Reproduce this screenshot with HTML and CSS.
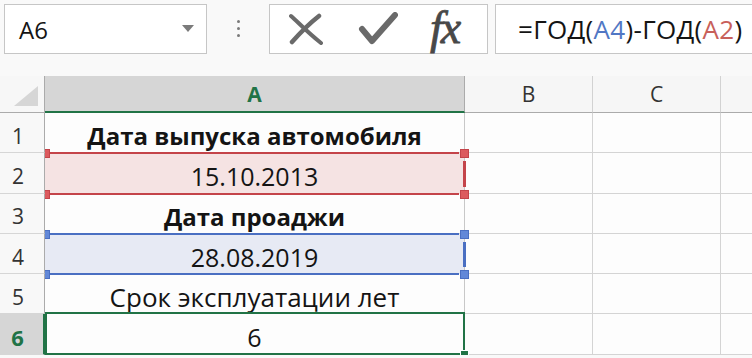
FILE: index.html
```html
<!DOCTYPE html>
<html lang="ru">
<head>
    <meta charset="UTF-8">
    <title>Срок эксплуатации</title>
    <link rel="stylesheet" href="styles.css">
</head>
<body>

<div class="bar">
    <div class="namebox">
        <span>A6</span>
        <svg class="arrow" width="12" height="7" viewBox="0 0 12 7"><polygon points="0,0 12,0 6,7" fill="#7b7b7b"/></svg>
    </div>
    <div class="dots"><i></i><i></i><i></i></div>
    <div class="fxbox">
        <svg width="36" height="32" viewBox="0 0 36 32">
            <path d="M3 3 C10 9 18 18 33 30" stroke="#6a6a6a" stroke-width="4" fill="none" stroke-linecap="round"/>
            <path d="M31 3 C22 10 12 20 4 29" stroke="#6a6a6a" stroke-width="4.5" fill="none" stroke-linecap="round"/>
        </svg>
        <svg width="40" height="34" viewBox="0 0 40 34">
            <path d="M4 17 L14 29 L37 3" stroke="#6a6a6a" stroke-width="6" fill="none" stroke-linecap="round" stroke-linejoin="round"/>
        </svg>
        <span class="fx">fx</span>
    </div>
    <div class="formula">=ГОД(<span class="blue">A4</span>)-ГОД(<span class="red">A2</span>)</div>
</div>

<div class="sheet">
    <div class="corner"><svg width="24" height="20" viewBox="0 0 24 20"><polygon points="24,0 24,20 0,20" fill="#d6d6d6"/></svg></div>
    <div class="colhead sel">A</div>
    <div class="colhead">B</div>
    <div class="colhead">C</div>
    <div class="colhead last"></div>

    <div class="rowhead">1</div>
    <div class="cell a bold">Дата выпуска автомобиля</div>
    <div class="cell"></div><div class="cell"></div><div class="cell last"></div>

    <div class="rowhead">2</div>
    <div class="cell a ref ref-red">15.10.2013
        <i class="h tl"></i><i class="h tr"></i><i class="h bl"></i><i class="h br"></i><i class="side"></i>
    </div>
    <div class="cell"></div><div class="cell"></div><div class="cell last"></div>

    <div class="rowhead">3</div>
    <div class="cell a bold">Дата проаджи</div>
    <div class="cell"></div><div class="cell"></div><div class="cell last"></div>

    <div class="rowhead">4</div>
    <div class="cell a ref ref-blue">28.08.2019
        <i class="h tl"></i><i class="h tr"></i><i class="h bl"></i><i class="h br"></i><i class="side"></i>
    </div>
    <div class="cell"></div><div class="cell"></div><div class="cell last"></div>

    <div class="rowhead">5</div>
    <div class="cell a wide">Срок эксплуатации лет</div>
    <div class="cell"></div><div class="cell"></div><div class="cell last"></div>

    <div class="rowhead sel">6</div>
    <div class="cell a active">6<i class="fill"></i></div>
    <div class="cell"></div><div class="cell"></div><div class="cell last"></div>
</div>

</body>
</html>
```

FILE: styles.css
```css
body {
    margin: 0;
    background: #f9f9f9;
    font-family: "Open Sans", "Noto Sans", sans-serif;
    color: #141414;
    overflow: hidden;
}
.bar {
    display: flex;
    align-items: center;
    height: 50px;
    padding: 4px 0 0 4px;
    width: 900px;
}
.namebox {
    box-sizing: border-box;
    width: 203px;
    height: 50px;
    background: #fff;
    border: 1px solid #c6c6c6;
    display: flex;
    align-items: center;
    justify-content: space-between;
    padding: 0 12px 0 14px;
    font-size: 24px;
}
.arrow {
    margin-top: -2px;
}
.dots {
    width: 62px;
    display: flex;
    flex-direction: column;
    align-items: center;
    gap: 4px;
    margin-top: -2px;
}
.dots i {
    width: 3px;
    height: 3px;
    border-radius: 50%;
    background: #7a7a7a;
}
.fxbox {
    box-sizing: border-box;
    width: 219px;
    height: 50px;
    background: #fff;
    border: 1px solid #c6c6c6;
    display: flex;
    align-items: center;
    padding: 0 0 0 18px;
    gap: 34px;
}
.fx {
    font-family: "Liberation Serif", serif;
    font-style: italic;
    font-size: 46px;
    line-height: 1;
    color: #484848;
    -webkit-text-stroke: 0.8px #484848;
    margin-left: -2px;
    margin-top: -2px;
    letter-spacing: -2px;
}
.formula {
    box-sizing: border-box;
    margin-left: 7px;
    flex: 1;
    height: 50px;
    background: #fff;
    border: 1px solid #c6c6c6;
    display: flex;
    align-items: center;
    padding-left: 22px;
    font-size: 26px;
    letter-spacing: 0.3px;
    white-space: nowrap;
}
.blue { color: #5177c4; }
.red { color: #c8605a; }

.sheet {
    margin-top: 22px;
    display: grid;
    grid-template-columns: 45px 420px 128px 128px 1fr;
    grid-template-rows: 37px repeat(6, 40.3px);
    background: #fdfdfd;
}
.corner {
    background: #f7f7f7;
    border-right: 1px solid #ababab;
    border-bottom: 1px solid #ababab;
    display: flex;
    align-items: flex-end;
    justify-content: flex-end;
    padding: 0 6px 6px 0;
    box-sizing: border-box;
}
.colhead {
    background: #f6f6f6;
    border-bottom: 1px solid #ababab;
    border-right: 1px solid #d2d2d2;
    display: flex;
    align-items: center;
    justify-content: center;
    font-size: 21px;
    color: #333;
    box-sizing: border-box;
}
.colhead.sel {
    background: #d6d6d6;
    border-bottom: 2px solid #217346;
    border-right: 1px solid #ababab;
    color: #217346;
    font-weight: bold;
}
.colhead.last { border-right: none; }
.rowhead {
    background: #f8f8f8;
    border-right: 1px solid #ababab;
    border-bottom: 1px solid #d6d6d6;
    display: flex;
    align-items: center;
    justify-content: center;
    padding: 6px 8px 0 0;
    font-size: 21px;
    color: #333;
    box-sizing: border-box;
    position: relative;
    z-index: 5;
}
.rowhead.sel {
    background: #d6d6d6;
    border-right: 2px solid #217346;
    color: #217346;
    font-weight: bold;
    font-size: 22px;
}
.cell {
    border-bottom: 1px solid #d4d4d4;
    border-right: 1px solid #d4d4d4;
    box-sizing: border-box;
    display: flex;
    align-items: center;
    justify-content: center;
    padding-top: 6px;
    font-size: 25px;
    position: relative;
}
.cell.last { border-right: none; }
.cell.a {
    border-right: 1px solid #c8c8c8;
}
.bold {
    font-weight: bold;
    font-size: 24px;
}
.wide {
    font-size: 26px;
}

.ref {
    border-bottom: none;
}
.ref-red { background: #f5e3e3; }
.ref-blue { background: #e7eaf4; }
.ref-red::before, .ref-red .side { border-color: #c4444a; }
.ref-blue::before, .ref-blue .side { border-color: #4a6fc2; }
.ref::before {
    content: "";
    position: absolute;
    left: 0;
    right: 5px;
    top: -1px;
    bottom: -1px;
    border-top-width: 2px;
    border-bottom-width: 2px;
    border-top-style: solid;
    border-bottom-style: solid;
    z-index: 1;
}
.ref .side {
    position: absolute;
    right: -2px;
    top: 8px;
    bottom: 7px;
    border-right-width: 3px;
    border-right-style: solid;
    z-index: 1;
}
.h {
    position: absolute;
    width: 7px;
    height: 7px;
    z-index: 3;
}
.ref-red .h { background: #dc5a5e; border: 1px solid #c4444a; }
.ref-blue .h { background: #6288d8; border: 1px solid #4a6fc2; }
.h.tl { left: -4px; top: -4px; }
.h.bl { left: -4px; bottom: -5px; }
.h.tr { right: -5px; top: -4px; }
.h.br { right: -5px; bottom: -5px; }

.active::before {
    content: "";
    position: absolute;
    left: 0;
    right: -1px;
    top: -2px;
    bottom: -1px;
    border: 2px solid #217346;
    z-index: 1;
}
.fill {
    position: absolute;
    right: -5px;
    bottom: -5px;
    width: 7px;
    height: 7px;
    background: #217346;
    border: 1px solid #fff;
    z-index: 3;
}
```
